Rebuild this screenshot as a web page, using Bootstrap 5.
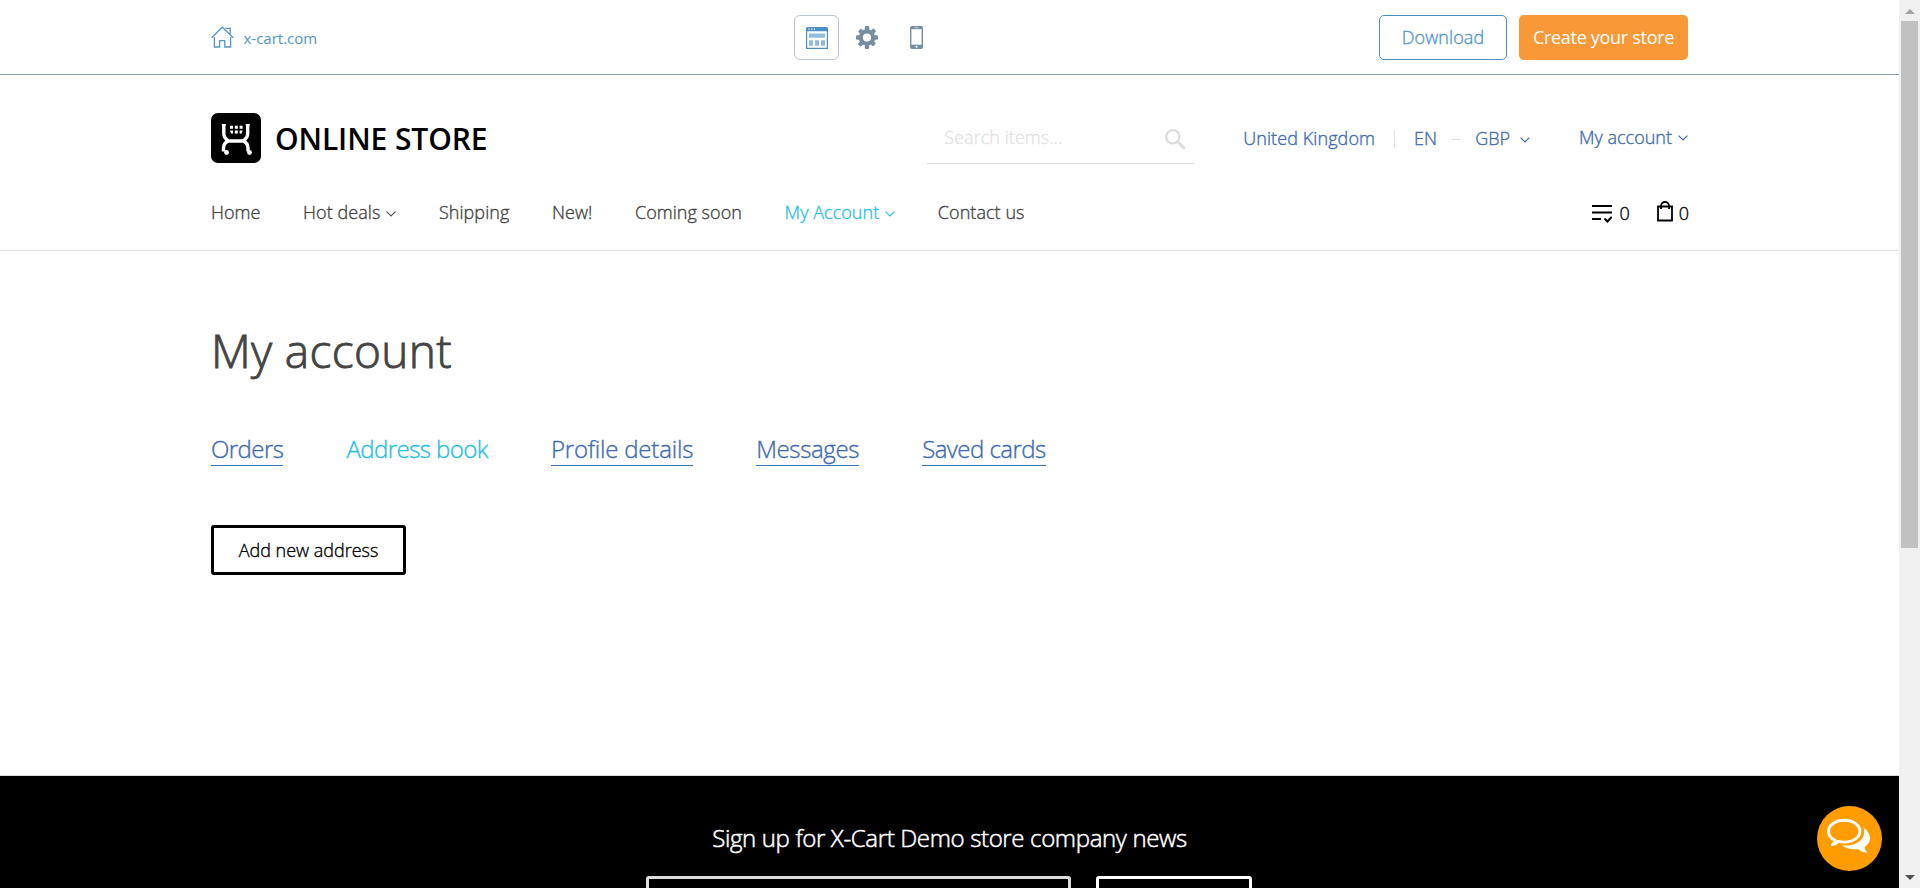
<!DOCTYPE html>
<html lang="en">
<head>
<meta charset="utf-8">
<title>My account</title>
<link href="https://cdn.jsdelivr.net/npm/bootstrap@5.3.0/dist/css/bootstrap.min.css" rel="stylesheet">
<style>
body{font-family:"Open Sans","Noto Sans",sans-serif;font-weight:300;font-size:18px;line-height:24px;color:#444;height:888px;overflow:hidden;background:#fff;-webkit-text-stroke:.35px currentColor}
a{text-decoration:none;color:#3e6bb0;white-space:nowrap}
svg{display:block;flex:none}
.wrap{width:1477px;margin:0 0 0 211px}
.page{height:888px;width:1899px}
.demo-bar{height:75px;border-bottom:1px solid #8b9dab}
.demo-bar .wrap{display:grid;grid-template-columns:583px auto 1fr}
.home-link{height:75px;color:#5396c9;font-size:15px;font-weight:400;-webkit-text-stroke:0}
.link-label{margin-left:9.500px}
.tools,.demo-actions{padding-top:15px}
.tools{gap:5px}
.demo-actions{gap:12px}
.tool{width:45px;height:45px;border:1px solid transparent;border-radius:6px}
.tool.on{border-color:#b5c5d2}
.demo-btn{height:45px;border-radius:5px;font-size:18px;padding:0 0 2px;font-weight:400;line-height:24px}
.btn-dl{width:128px;border:1px solid #4b90c5;color:#5396c9;font-weight:300;letter-spacing:.1px}
.btn-create{width:169px;background:#f99836;color:#fff;letter-spacing:-.3px;-webkit-text-stroke:0}
.store-head{height:176px;border-bottom:1px solid #dfdfdf}
.head-row{padding-top:38px;height:118px}
.brand{width:716px;font-weight:600;font-size:30px;color:#000;line-height:52px;letter-spacing:-.1px;-webkit-text-stroke:0}
.brand-name{margin-left:14px}
.search{width:267px;height:51px;border-bottom:1px solid #d9d9d9;color:#e3e3e3}
.hint{margin:12px 0 0 17.500px;letter-spacing:.05px}
.search svg{margin:16px 8px 0 0}
.locale{margin-left:49.500px;padding-top:13px;width:288px;letter-spacing:.09px}
.vline{width:1px;height:18px;background:#e3e3e9;margin:4px 19px 0}
.dash{width:8px;height:1px;background:#ddd;margin:13px 15px 0}
.chev{margin:10px 0 0 6px}
.locale .chev{margin:11px 0 0 10px}
.acct{margin:12px 0 0 48px}
.nav-row{padding-top:7px}
.nav-row .chev{margin-top:11px}
.main-nav{gap:42.600px;letter-spacing:.05px}
.main-nav a{color:#444}
.main-nav a.active,.tabs a.active{color:#27bfe0}
.cnt{color:#000;margin-right:-1px}
.ico-list{margin:4px 7px 0 0}
.ico-bag{margin:1px 6px 0 27px}
.cnt span{margin-top:1px}
main{padding-top:69px}
h1{font-size:46px;font-weight:300!important;line-height:60px;letter-spacing:.35px;margin:0 0 53px!important;-webkit-text-stroke:.9px currentColor}
.tabs{font-size:24px;line-height:32px;gap:63px;letter-spacing:-.55px}
.tabs a{border-bottom:1px solid #3e74b5;height:33px}
.tabs a.active{border-color:transparent}
.tabs .profile{letter-spacing:-.2px}
.tabs .msgs{letter-spacing:-.35px}
.btn-add{display:block;margin-top:59px;width:195px;height:50px;border:3px solid #000;border-radius:3px;font-weight:300;font-size:18px;color:#000;padding:0}
.site-foot{height:113px;background:#000;border-top:1px solid #d8dcdc;color:#fff;font-size:24px;line-height:32px}
.news-title{padding-top:46px;letter-spacing:-.35px;-webkit-text-stroke:.5px currentColor}
.news-form{gap:25px;margin:22px 0 0 -1px}
.news-in{width:425px;height:50px;border:3px solid #ddd;border-radius:3px}
.news-btn{width:156px;height:50px;border:3px solid #fff;border-radius:3px}
.sbar{width:21px;background:#f0f0f0}
.thumb{width:17px;height:527px;background:#c1c1c1;margin-left:2px}
.sb-down{margin-top:319px}
.chat{position:fixed;left:1817px;top:806px}
</style>
</head>
<body>
<div class="d-flex">
<div class="page d-flex flex-column">
  <header class="demo-bar">
    <div class="wrap align-items-start">
      <a class="home-link d-flex align-items-center" href="#">
        <svg width="23" height="23" viewBox="0 0 23 23" fill="none" stroke="#5396c9" stroke-width="1.3"><path d="M.6 11.8 11.3 1.2 22.2 11.8M3.4 11v10h5.2v-6.4h5.2V21h5.8V11M14.5 2.3h4.7v5.4"/></svg>
        <span class="link-label">x-cart.com</span>
      </a>
      <div class="tools d-flex">
        <a class="tool on d-flex align-items-center justify-content-center" href="#"><svg width="22" height="22" viewBox="0 0 22 22"><path fill="#4e90c6" d="M1.5 0h19A1.5 1.5 0 0 1 22 1.5V22H0V1.5A1.5 1.5 0 0 1 1.5 0z"/><path fill="#fff" d="M1.200 4.300h19.600v16.500H1.200zM2.500 1.500h1.200v1.300H2.500zM5.200 1.500h1.200v1.300H5.200zM7.900 1.500h1.200v1.300H7.900z"/><path fill="#94bce0" d="M3 6.500h16v4.300H3zM3 13.300h4v5.500H3zM9 13.300h4v5.500H9zM15 13.300h4v5.500h-4z"/></svg></a>
        <a class="tool d-flex align-items-center justify-content-center" href="#"><svg width="22" height="23" viewBox="-11 -11.500 22 23"><g fill="#778ea1"><circle r="8.300"/><g id="t"><rect x="-2.200" y="-11.400" width="4.400" height="22.800" rx="1.200"/><rect x="-11" y="-2.200" width="22" height="4.400" rx="1.200"/></g><use href="#t" transform="rotate(45) scale(.97)"/></g><circle r="4.100" fill="#fff"/></svg></a>
        <a class="tool d-flex align-items-center justify-content-center" href="#"><svg width="13" height="23" viewBox="0 0 13 23"><rect width="13" height="23" rx="2" fill="#778ea1"/><path fill="#fff" d="M1.400 3.200h10.200v15.500H1.400z"/><rect x="4.500" y="1.200" width="4" height="1" fill="#c3ced7"/><circle cx="6.500" cy="20.800" r="1" fill="#fff"/></svg></a>
      </div>
      <div class="demo-actions d-flex justify-content-end">
        <a class="btn demo-btn btn-dl d-flex align-items-center justify-content-center" href="#">Download</a>
        <a class="btn demo-btn btn-create d-flex align-items-center justify-content-center" href="#">Create your store</a>
      </div>
    </div>
  </header>
  <header class="store-head">
    <div class="wrap">
      <div class="head-row d-flex align-items-start">
        <a class="brand d-flex" href="#">
          <svg width="50" height="50" viewBox="0 0 50 50"><rect width="50" height="50" rx="7"/><g fill="none" stroke="#fff"><path stroke-width="3.400" d="M12.800 11v9.500q0 4.500 4.700 7.500h14.500q4.700-3 4.700-7.500V11M17.500 27.800q-5 2-5 7.500v3.200M32 27.800q5 2 5 7.500v3.200"/><path stroke-width="1.500" d="M10.800 11.700h4M34.700 11.700h4"/></g><g fill="#fff"><path d="M19 12.800h3v3h-3zM23.800 12.800h3v3h-3zM28.600 12.800h3v3h-3zM19 17.400h3v3h-2zM23.800 17.400h3v3h-3zM28.600 17.400h3l-1 3h-2z"/><circle cx="15.500" cy="39.500" r="2.400"/><circle cx="38.500" cy="39.500" r="2.400"/></g></svg>
          <span class="brand-name">ONLINE STORE</span>
        </a>
        <div class="search d-flex justify-content-between">
          <span class="hint">Search items...</span>
          <svg width="21" height="21" viewBox="0 0 21 21" fill="none" stroke="#dcdcdc"><circle cx="7.800" cy="7.800" r="6.600" stroke-width="2.200"/><path stroke-width="3" stroke-linecap="round" d="m13 13 5.800 5.800"/></svg>
        </div>
        <div class="locale d-flex">
          <a class="country" href="#">United Kingdom</a><span class="vline"></span><a class="lang" href="#">EN</a><span class="dash"></span><a class="curr" href="#">GBP</a>
          <svg class="chev" width="10" height="6" viewBox="0 0 10 6" fill="none" stroke="#3e6bb0" stroke-width="1.200"><path d="m.6.6 4.400 4.400L9.400.6"/></svg>
        </div>
        <a class="acct d-flex" href="#">My account<svg class="chev" width="10" height="6" viewBox="0 0 10 6" fill="none" stroke="#3e6bb0" stroke-width="1.200"><path d="m.6.6 4.400 4.400L9.400.6"/></svg></a>
      </div>
      <div class="nav-row d-flex">
        <nav class="main-nav d-flex">
          <a href="#">Home</a>
          <a class="d-flex" href="#">Hot deals<svg class="chev" width="10" height="6" viewBox="0 0 10 6" fill="none" stroke="#555" stroke-width="1.200"><path d="m.6.6 4.400 4.400L9.400.6"/></svg></a>
          <a href="#">Shipping</a>
          <a href="#">New!</a>
          <a href="#">Coming soon</a>
          <a class="active d-flex" href="#">My Account<svg class="chev" width="10" height="6" viewBox="0 0 10 6" fill="none" stroke="#27bfe0" stroke-width="1.200"><path d="m.6.6 4.400 4.400L9.400.6"/></svg></a>
          <a href="#">Contact us</a>
        </nav>
        <div class="cnt d-flex ms-auto">
          <svg class="ico-list" width="20" height="19" viewBox="0 0 20 19" fill="none" stroke="#000" stroke-width="2"><path d="M0 2h20M0 8.500h20M0 15h9M12.500 14.500l3 3 4.200-4.700"/></svg><span>0</span>
          <svg class="ico-bag" width="16" height="21" viewBox="0 0 16 21" fill="none" stroke="#000" stroke-width="1.800"><path d="M1 5.500h14v14H1zM4 8V5a4 4 0 0 1 8 0v3"/></svg><span>0</span>
        </div>
      </div>
    </div>
  </header>
  <main class="flex-grow-1">
    <div class="wrap">
      <h1>My account</h1>
      <nav class="tabs d-flex">
        <a href="#">Orders</a><a class="active" href="#">Address book</a><a class="profile" href="#">Profile details</a><a class="msgs" href="#">Messages</a><a href="#">Saved cards</a>
      </nav>
      <button class="btn btn-add">Add new address</button>
    </div>
  </main>
  <footer class="site-foot text-center">
    <div class="news-title">Sign up for X-Cart Demo store company news</div>
    <div class="news-form d-flex justify-content-center"><div class="news-in"></div><div class="news-btn"></div></div>
  </footer>
</div>
<aside class="sbar">
  <svg width="21" height="21"><path fill="#a3a3a3" d="m6 14 5-5 5 5z"/></svg>
  <div class="thumb"></div>
  <svg class="sb-down" width="21" height="21"><path fill="#505050" d="m6 8 5 5 5-5z"/></svg>
</aside>
</div>
<svg class="chat" width="65" height="65" viewBox="0 0 65 65"><circle cx="32.500" cy="32.500" r="32.500" fill="#ff9c00"/><path fill="#fff" d="M46.500 21.500c5.500 4 8.500 10 5 15.500-1 1.800-2.500 3-4 4 .3 2.500 1.500 4.200 3.300 5.600-3.700.2-7-1.300-9.800-3.700-6 .8-12-.3-16-3.400 10 .8 19-3 21.500-9.500 1-3 .8-6 0-8.500z"/><path fill="none" stroke="#fff" stroke-width="2.900" stroke-linejoin="round" d="M18.500 34.500C14 32.500 11.500 29 11.500 25.200c0-6 6.800-10.900 15.700-10.900s15.700 4.900 15.700 10.900-6.800 10.900-15.700 10.900c-2 0-4-.2-5.700-.7-1.800 1.700-3.700 2.700-6 3.300 1.600-1.200 2.700-2.600 3-4.200z"/></svg>
<script src="https://cdn.jsdelivr.net/npm/bootstrap@5.3.0/dist/js/bootstrap.bundle.min.js"></script>
</body>
</html>
